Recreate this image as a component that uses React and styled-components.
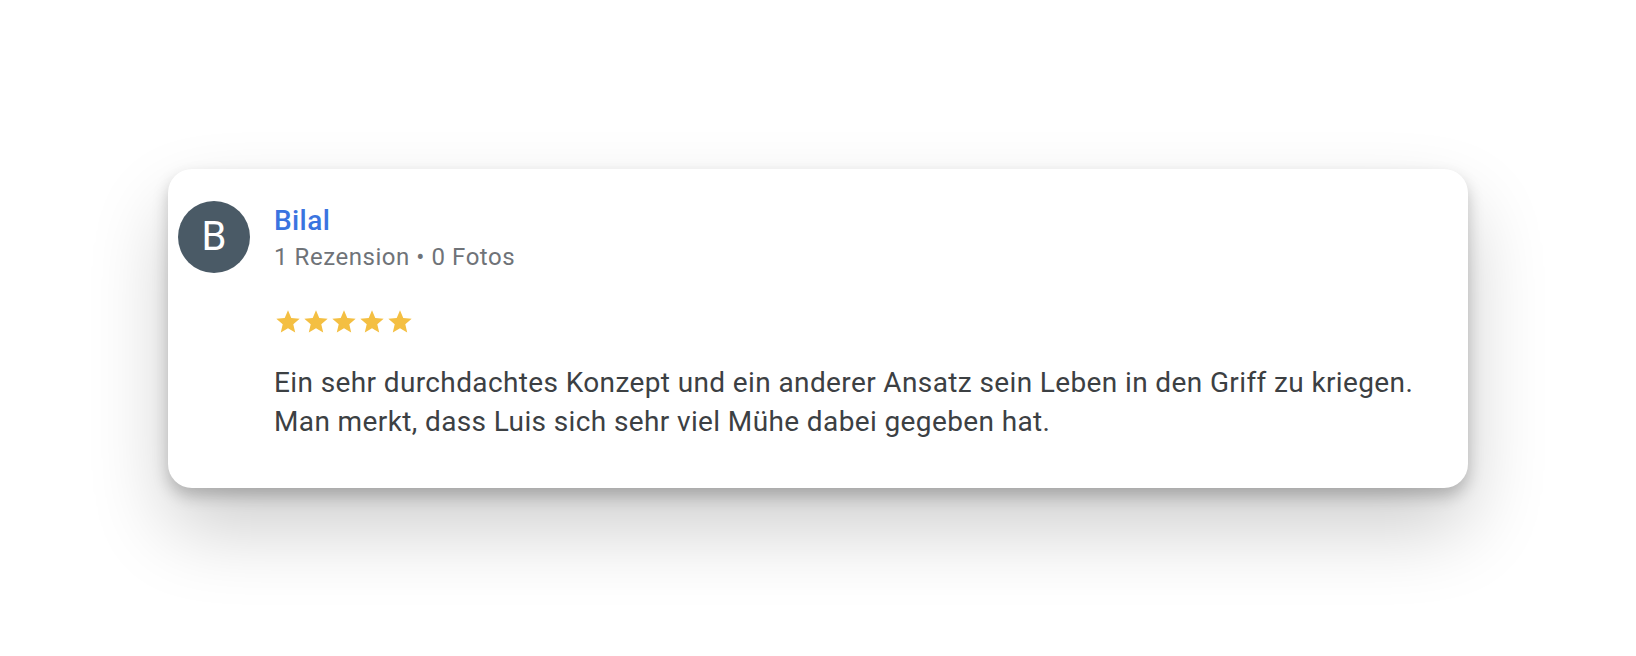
import React from 'react';
import styled, { createGlobalStyle } from 'styled-components';

const GlobalStyle = createGlobalStyle`
  html, body {
    margin: 0;
    padding: 0;
    background: #ffffff;
  }
  body {
    font-family: Roboto, 'Noto Sans', Arial, sans-serif;
  }
`;

const Page = styled.div`
  width: 100%;
  height: 656px;
  display: flex;
  justify-content: center;
  align-items: center;
`;

const Card = styled.div`
  width: 1300px;
  box-sizing: border-box;
  padding: 32px 24px 47px 10px;
  display: flex;
  align-items: flex-start;
  gap: 24px;
  background: #ffffff;
  border-radius: 24px;
  box-shadow: 0 8px 16px rgba(0, 0, 0, 0.22), 0 40px 80px rgba(0, 0, 0, 0.2);
`;

const Avatar = styled.div`
  flex: 0 0 72px;
  width: 72px;
  height: 72px;
  border-radius: 50%;
  background: #4a5a66;
  color: #ffffff;
  display: flex;
  align-items: center;
  justify-content: center;
  font-size: 40px;
  font-weight: 400;
`;

const Content = styled.div`
  flex: 1;
  display: flex;
  flex-direction: column;
`;

const Name = styled.div`
  font-size: 28px;
  line-height: 40px;
  font-weight: 500;
  color: #3a74e0;
  letter-spacing: 0.4px;
`;

const Meta = styled.div`
  font-size: 24px;
  line-height: 32px;
  color: #6f7378;
  letter-spacing: 0.55px;
`;

const Stars = styled.div`
  display: flex;
  margin-top: 35px;
  height: 28px;
`;

const Body = styled.p`
  margin: 27px 0 0;
  font-size: 28px;
  line-height: 39px;
  color: #3c4043;
  letter-spacing: 0.38px;
`;

const Star = () => (
  <svg width="28" height="28" viewBox="0 0 24 24">
    <path
      fill="#f4bf42"
      d="M12 17.27L18.18 21l-1.64-7.03L22 9.24l-7.19-.61L12 2 9.19 8.63 2 9.24l5.46 4.73L5.82 21z"
    />
  </svg>
);

const review = {
  name: 'Bilal',
  meta: '1 Rezension • 0 Fotos',
  rating: 5,
  text: 'Ein sehr durchdachtes Konzept und ein anderer Ansatz sein Leben in den Griff zu kriegen. Man merkt, dass Luis sich sehr viel Mühe dabei gegeben hat.',
};

const App = () => {
  return (
    <>
      <GlobalStyle />
      <Page>
        <Card>
          <Avatar>{review.name[0]}</Avatar>
          <Content>
            <Name>{review.name}</Name>
            <Meta>{review.meta}</Meta>
            <Stars>
              {Array.from({ length: review.rating }).map((_, i) => (
                <Star key={i} />
              ))}
            </Stars>
            <Body>{review.text}</Body>
          </Content>
        </Card>
      </Page>
    </>
  );
};

export default App;
